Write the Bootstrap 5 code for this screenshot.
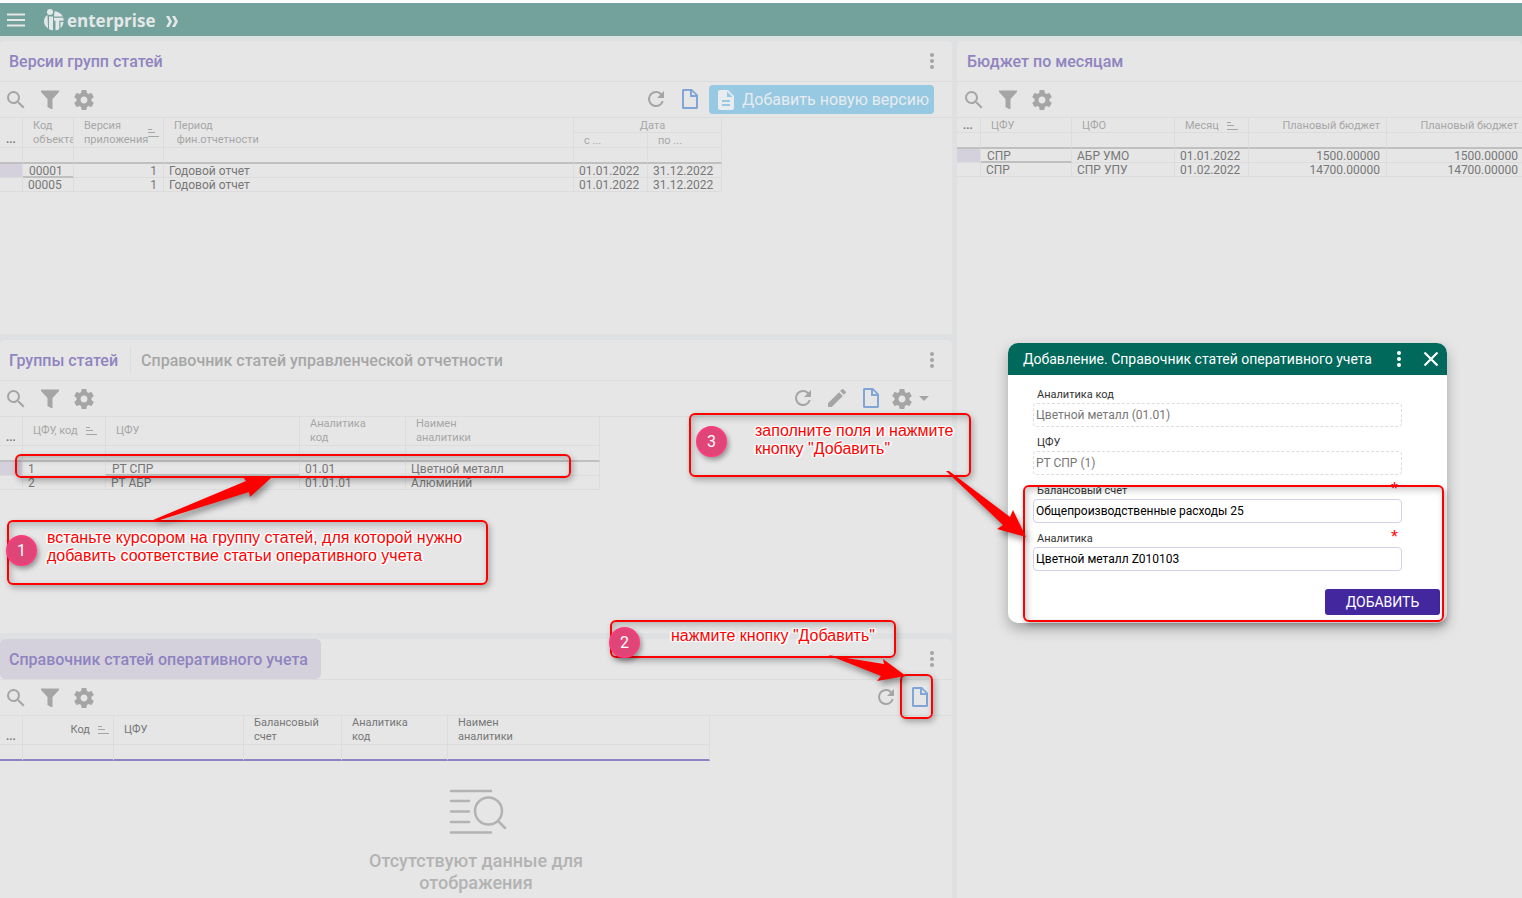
<!DOCTYPE html>
<html lang="ru">
<head>
<meta charset="utf-8">
<meta name="viewport" content="width=device-width, initial-scale=1">
<title>Справочник статей оперативного учета</title>
<link rel="stylesheet" href="https://cdn.jsdelivr.net/npm/bootstrap@5.3.0/dist/css/bootstrap.min.css">
<style>
:root{--surface:#e6e6e6;--line:#dcdcdd;--gutter:#dfe0e2;--violet:#8f84c0;--tint:#d4d1dc;--icon:#a5a5a5;--muted:#a6a6a6;--ink:#777}
body{font-family:Roboto,"Open Sans",sans-serif;font-size:12px;line-height:14px;color:var(--ink);background:var(--gutter)}
button{padding:0;border:0;background:none;color:inherit}
svg{display:block;fill:currentColor}
.shell{min-height:100vh;border-top:3px solid #fdfdfd}
.topbar{height:33px;background:#73a29c;color:#e4e8e8}
.brand{font:700 17px/20px "Open Sans",sans-serif;color:inherit}
.brand span{padding:3px 0 0 3px}
.unfold{margin:4px 0 0 10px}
.board{display:grid;grid-template-columns:minmax(0,952fr) minmax(0,565fr);grid-template-rows:293fr 293fr 259fr;gap:6px 5px;padding-top:5px}
.pane{background:var(--surface);border-radius:5px 5px 0 0;overflow:hidden;min-height:0;min-width:0}
.pane-tall{grid-column:2;grid-row:1/4}
.pane-head{height:41px;border-bottom:1px solid var(--line)}
.pane-head h2{font-size:16px;height:40px;line-height:42px;font-weight:500;margin:0;padding:0 9px;color:var(--violet)}
.pane-head h2.other{color:var(--muted);border-left:1px solid var(--line);height:28px;line-height:30px;padding-left:10px}
.pane-head h2.picked{background:var(--tint);border-radius:0 5px 5px 5px;padding-right:13px}
.kebab{width:24px;height:24px;color:var(--icon);margin-right:8px}
.tools{height:36px;border-bottom:1px solid var(--line);padding:0 20px 0 4px;gap:10px;color:var(--icon)}
.pane-tall .tools{padding-left:5px}
.pane-tall h2{padding-left:10px}
.tools .blue{color:#7fa6d6}
.new-version{height:29px;margin:0 -2px 0 -3px;padding:0 5px;gap:4px;border-radius:4px;background:#97c9e2;color:#e8ecee;font-size:16px}
.actions{margin-left:-3px;gap:5px;padding-right:3px}
.data-grid{table-layout:fixed;border-collapse:separate;border-spacing:0;width:0}
.data-grid th,.data-grid td{padding:2px 6px 0 5px;border-right:1px solid var(--line);border-bottom:1px solid var(--line);white-space:nowrap;overflow:hidden;height:14px;line-height:11px}
.data-grid th{font-size:11px;font-weight:400;line-height:14px;padding:0 0 0 10px;color:var(--muted);height:15px}
.data-grid .low th{padding-top:1px;line-height:13px}
.data-grid .low th[rowspan]{line-height:14px}
.data-grid .tall th{height:29px}
.data-grid .mark-col,.data-grid .low .mark-col{padding:0 0 0 6px;vertical-align:bottom;color:var(--ink);font-weight:700}
.data-grid .num{text-align:right}
.data-grid th.num,.data-grid .low th.num{padding:1px 6px 0 0}
.data-grid .filter td{height:16px;border-bottom:2px solid #c0c0c0}
.data-grid .here{background:var(--tint)}
.data-grid .cursor{box-shadow:inset 0 -1px #bfbfbf;border-bottom-color:#bfbfbf;padding-left:6px}
.active-grid th{color:var(--ink)}
.active-grid .filter td{border-bottom-color:var(--violet)}
.empty{color:#b3b3b3;font-size:18px;font-weight:500;line-height:22px;padding-top:26px}
.empty svg{margin-bottom:15px}
.empty p{max-width:240px}
.over{position:absolute}
.dialog-box{left:1008px;top:343px;width:439px;border-radius:10px;background:#fff;overflow:hidden;color:#333}
.dialog-shade{box-shadow:0 6px 14px rgba(0,0,0,.28)}
.dialog-top{height:32px;background:#00695c;color:#fff;padding:0 4px 0 15px}
.dialog-top h1{font-size:14px;font-weight:400;line-height:32px;margin:0}
.fields{padding:4px 45px 0 25px}
.fields label{height:24px;padding:9px 0 0 4px;font-size:11px;color:#333}
.fields .need::after{content:"*";float:right;color:#f00;font:18px/18px "Liberation Sans",sans-serif;padding-right:4px;margin-top:-4px}
.fields input{width:100%;height:24px;padding:0 2px;border:1px solid #d4d0ec;border-radius:4px;font-size:12px;color:#000;background:#fff}
.fields input:disabled{border:1px dashed #ddd;color:#777;opacity:1}
.submit{width:115px;height:26px;margin:18px 7px 8px 0;border-radius:3px;background:#43279f;color:#fff;font-size:14px}
.notes{inset:0;pointer-events:none;overflow:hidden}
.frame{border:2px solid #f00;border-radius:6px;box-shadow:2px 3px 6px rgba(0,0,0,.28),inset 2px 3px 7px rgba(0,0,0,.22)}
.say{font:16px/18px "Liberation Sans",sans-serif;color:#f00;white-space:nowrap;text-shadow:0 0 2px #fff,1px 1px 1px #fff,-1px -1px 1px #fff,1px -1px 1px #fff,-1px 1px 1px #fff,2px 0 1px #fff,-2px 0 1px #fff}
.step{width:31px;height:31px;border-radius:50%;background:#e04578;border:2px solid #fb3c7c;color:#fff;font-size:16px;line-height:27px;text-align:center;box-shadow:2px 3px 5px rgba(0,0,0,.35)}
.arrows{filter:drop-shadow(2px 4px 3px rgba(0,0,0,.4));fill:#f00}
</style>
<script src="https://cdn.jsdelivr.net/npm/bootstrap@5.3.0/dist/js/bootstrap.bundle.min.js"></script>
</head>
<body>
<svg class="d-none" xmlns="http://www.w3.org/2000/svg">
  <symbol id="i-search" viewBox="0 0 24 24"><path d="M15.5 14h-.79l-.28-.27A6.47 6.47 0 0 0 16 9.500 6.500 6.500 0 1 0 9.500 16c1.610 0 3.090-.59 4.230-1.570l.27.280v.79l5 4.990L20.490 19l-4.990-5zm-6 0C7.010 14 5 11.990 5 9.500S7.010 5 9.500 5 14 7.010 14 9.500 11.990 14 9.500 14z"/></symbol>
  <symbol id="i-filter" viewBox="0 0 24 24"><path d="M3 2.500h18v1.500l-6.500 7V21h-1.500l-3.500-2v-8L3 4z"/></symbol>
  <symbol id="i-gear" viewBox="0 0 24 24"><path d="M19.430 12.980c.04-.32.07-.64.07-.98s-.03-.66-.07-.98l2.110-1.650c.19-.15.24-.42.12-.64l-2-3.460c-.12-.22-.39-.3-.61-.22l-2.490 1c-.52-.4-1.080-.73-1.690-.98l-.38-2.650A.488.488 0 0 0 14 2h-4c-.25 0-.46.18-.49.42l-.38 2.650c-.61.25-1.170.59-1.690.98l-2.490-1c-.23-.09-.49 0-.61.22l-2 3.460c-.13.22-.07.49.12.64l2.110 1.650c-.04.32-.07.65-.07.98s.03.66.07.98l-2.110 1.650c-.19.15-.24.42-.12.64l2 3.460c.12.22.39.3.61.22l2.490-1c.52.4 1.080.73 1.690.98l.38 2.650c.03.24.24.42.49.42h4c.25 0 .46-.18.49-.42l.38-2.650c.61-.25 1.170-.59 1.690-.98l2.490 1c.23.09.49 0 .61-.22l2-3.460c.12-.22.07-.49-.12-.64l-2.110-1.650zM12 15.500c-1.930 0-3.500-1.570-3.500-3.500s1.570-3.500 3.500-3.500 3.500 1.570 3.500 3.500-1.570 3.500-3.500 3.500z"/></symbol>
  <symbol id="i-refresh" viewBox="0 0 24 24"><path d="M17.650 5.350A7.958 7.958 0 0 0 12 3a8 8 0 1 0 7.730 10h-2.080A5.990 5.990 0 0 1 12 17a6 6 0 1 1 0-12c1.660 0 3.140.69 4.220 1.780L13 10h7V3l-2.350 2.350z"/></symbol>
  <symbol id="i-page" viewBox="0 0 24 24"><path d="M5.500 1H14l6 6v12.500c0 .8-.7 1.500-1.500 1.500h-13c-.8 0-1.500-.7-1.500-1.500v-17C4 1.700 4.700 1 5.500 1zM6 3v16h12V9h-6V3zm8 .5V7h3.500z"/></symbol>
  <symbol id="i-doc" viewBox="0 0 24 24"><path d="M14 2H6c-1.100 0-2 .9-2 2v16c0 1.100.9 2 2 2h12c1.100 0 2-.9 2-2V8l-6-6zm2 16H8v-2h8v2zm0-4H8v-2h8v2zm-3-5V3.500L18.500 9H13z"/></symbol>
  <symbol id="i-pen" viewBox="0 0 24 24"><path d="M3 16.250V20h3.750L17.810 8.940l-3.750-3.750L3 16.250zM20.710 6.040a1 1 0 0 0 0-1.410l-2.340-2.340a1 1 0 0 0-1.410 0l-1.830 1.830 3.750 3.750 1.830-1.830z"/></symbol>
  <symbol id="i-dots" viewBox="0 0 24 24"><circle cx="12" cy="6" r="2"/><circle cx="12" cy="12" r="2"/><circle cx="12" cy="18" r="2"/></symbol>
  <symbol id="i-sort" viewBox="0 0 11 8"><path d="M0 0h4v1H0zM0 3h7v1H0zM0 7h11v1H0z"/></symbol>
</svg>

<div class="shell d-flex flex-column position-relative overflow-hidden">
  <header class="topbar d-flex align-items-center ps-1">
    <button type="button" aria-label="Меню"><svg width="24" height="24" viewBox="0 0 24 24"><path d="M3 5.500h18v2H3zM3 11h18v2H3zM3 16.500h18v2H3z"/></svg></button>
    <a href="#" class="brand d-flex align-items-center text-decoration-none ms-3">
      <svg width="20" height="22" viewBox="0 0 20 22"><circle cx="6" cy="3" r="3"/><path d="M10.500 2.200c4 .3 7 2.300 8.300 5.300H10z"/><path d="M3.500 6C1.200 7.500 0 9.800 0 12.200c0 3 1.600 5.700 4 7.200z"/><path d="M5 7.500h4V21.300c-1.500 0-2.800-.4-4-1z"/><path d="M10 8.800h9.300c.3 1 .4 2 .2 3h-4.300v8.500c-1.100.6-2.300 1-3.700 1v-9.500H10z"/><path d="M16.500 13h3c-.3 2.500-1.300 4.700-3 6.200z"/></svg>
      <span>enterprise</span>
    </a>
    <button type="button" class="unfold" aria-label="Развернуть"><svg width="12" height="11" viewBox="0 0 12 11"><path d="M0 0h3l3 5.500L3 11H0l3-5.500zM6 0h3l3 5.500L9 11H6l3-5.500z"/></svg></button>
  </header>

  <main class="board flex-fill">
    <section class="pane">
      <div class="pane-head d-flex align-items-center"><h2>Версии групп статей</h2><button type="button" class="kebab ms-auto" aria-label="Ещё"><svg width="24" height="24"><use href="#i-dots"/></svg></button></div>
      <div class="tools d-flex align-items-center">
        <button type="button" aria-label="Поиск"><svg width="24" height="24"><use href="#i-search"/></svg></button>
        <button type="button" aria-label="Фильтр"><svg width="24" height="24"><use href="#i-filter"/></svg></button>
        <button type="button" aria-label="Настройки"><svg width="24" height="24"><use href="#i-gear"/></svg></button>
        <button type="button" class="ms-auto" aria-label="Обновить"><svg width="24" height="24"><use href="#i-refresh"/></svg></button>
        <button type="button" class="blue" aria-label="Добавить"><svg width="24" height="24"><use href="#i-page"/></svg></button>
        <button type="button" class="new-version d-flex align-items-center"><svg width="24" height="24"><use href="#i-doc"/></svg>Добавить новую версию</button>
      </div>
      <table class="data-grid">
        <colgroup><col style="width:23px"><col style="width:51px"><col style="width:90px"><col style="width:410px"><col style="width:74px"><col style="width:74px"></colgroup>
        <thead>
          <tr class="low"><th rowspan="2" class="mark-col">...</th><th rowspan="2">Код<br>объекта</th><th rowspan="2"><span class="d-flex align-items-center"><span>Версия<br>приложения</span><svg width="11" height="8"><use href="#i-sort"/></svg></span></th><th rowspan="2">Период<br>&nbsp;фин.отчетности</th><th colspan="2" class="text-center">Дата</th></tr>
          <tr class="low"><th>с ...</th><th>по ...</th></tr>
          <tr class="filter"><td></td><td></td><td></td><td></td><td></td><td></td></tr>
        </thead>
        <tbody>
          <tr><td class="here"></td><td class="cursor">00001</td><td class="num">1</td><td>Годовой отчет</td><td>01.01.2022</td><td>31.12.2022</td></tr>
          <tr><td></td><td>00005</td><td class="num">1</td><td>Годовой отчет</td><td>01.01.2022</td><td>31.12.2022</td></tr>
        </tbody>
      </table>
    </section>

    <section class="pane">
      <div class="pane-head d-flex align-items-center"><h2 class="pe-2 me-1">Группы статей</h2><h2 class="other">Справочник статей управленческой отчетности</h2><button type="button" class="kebab ms-auto" aria-label="Ещё"><svg width="24" height="24"><use href="#i-dots"/></svg></button></div>
      <div class="tools d-flex align-items-center">
        <button type="button" aria-label="Поиск"><svg width="24" height="24"><use href="#i-search"/></svg></button>
        <button type="button" aria-label="Фильтр"><svg width="24" height="24"><use href="#i-filter"/></svg></button>
        <button type="button" aria-label="Настройки"><svg width="24" height="24"><use href="#i-gear"/></svg></button>
        <button type="button" class="ms-auto" aria-label="Обновить"><svg width="24" height="24"><use href="#i-refresh"/></svg></button>
        <button type="button" aria-label="Изменить"><svg width="24" height="24"><use href="#i-pen"/></svg></button>
        <button type="button" class="blue" aria-label="Добавить"><svg width="24" height="24"><use href="#i-page"/></svg></button>
        <button type="button" class="actions d-flex align-items-center" aria-label="Действия"><svg width="24" height="24"><use href="#i-gear"/></svg><svg width="10" height="5" viewBox="0 0 10 5"><path d="M0 0h10L5 5z"/></svg></button>
      </div>
      <table class="data-grid">
        <colgroup><col style="width:23px"><col style="width:83px"><col style="width:194px"><col style="width:106px"><col style="width:194px"></colgroup>
        <thead>
          <tr class="tall"><th class="mark-col">...</th><th><span class="d-flex align-items-center gap-2">ЦФУ, код<svg width="11" height="8"><use href="#i-sort"/></svg></span></th><th>ЦФУ</th><th>Аналитика<br>код</th><th>Наимен<br>аналитики</th></tr>
          <tr class="filter"><td></td><td></td><td></td><td></td><td></td></tr>
        </thead>
        <tbody>
          <tr><td class="here"></td><td>1</td><td class="cursor">РТ СПР</td><td>01.01</td><td>Цветной металл</td></tr>
          <tr><td></td><td>2</td><td>РТ АБР</td><td>01.01.01</td><td>Алюминий</td></tr>
        </tbody>
      </table>
    </section>

    <section class="pane d-flex flex-column">
      <div class="pane-head d-flex align-items-center"><h2 class="picked">Справочник статей оперативного учета</h2><button type="button" class="kebab ms-auto" aria-label="Ещё"><svg width="24" height="24"><use href="#i-dots"/></svg></button></div>
      <div class="tools d-flex align-items-center">
        <button type="button" aria-label="Поиск"><svg width="24" height="24"><use href="#i-search"/></svg></button>
        <button type="button" aria-label="Фильтр"><svg width="24" height="24"><use href="#i-filter"/></svg></button>
        <button type="button" aria-label="Настройки"><svg width="24" height="24"><use href="#i-gear"/></svg></button>
        <button type="button" class="ms-auto" aria-label="Обновить"><svg width="24" height="24"><use href="#i-refresh"/></svg></button>
        <button type="button" class="blue" aria-label="Добавить"><svg width="24" height="24"><use href="#i-page"/></svg></button>
      </div>
      <table class="data-grid active-grid">
        <colgroup><col style="width:23px"><col style="width:91px"><col style="width:130px"><col style="width:98px"><col style="width:106px"><col style="width:262px"></colgroup>
        <thead>
          <tr class="tall"><th class="mark-col">...</th><th><span class="d-flex align-items-center justify-content-end gap-2 pe-1">Код<svg width="11" height="8" color="#a6a6a6"><use href="#i-sort"/></svg></span></th><th>ЦФУ</th><th>Балансовый<br>счет</th><th>Аналитика<br>код</th><th>Наимен<br>аналитики</th></tr>
          <tr class="filter"><td></td><td></td><td></td><td></td><td></td><td></td></tr>
        </thead>
      </table>
      <div class="empty d-flex flex-column align-items-center text-center">
        <svg width="62" height="48" viewBox="0 0 62 48" fill="none" stroke="currentColor" stroke-width="2.500" stroke-linecap="round"><path fill="none" d="M6 4h40M6 14h18M6 24.500h18M6 35h18M6 45.500h40M53 34l7 7"/><circle cx="43.500" cy="24" r="13.500" fill="none"/></svg>
        <p class="mb-0">Отсутствуют данные для отображения</p>
      </div>
    </section>

    <section class="pane pane-tall">
      <div class="pane-head d-flex align-items-center"><h2>Бюджет по месяцам</h2></div>
      <div class="tools d-flex align-items-center">
        <button type="button" aria-label="Поиск"><svg width="24" height="24"><use href="#i-search"/></svg></button>
        <button type="button" aria-label="Фильтр"><svg width="24" height="24"><use href="#i-filter"/></svg></button>
        <button type="button" aria-label="Настройки"><svg width="24" height="24"><use href="#i-gear"/></svg></button>
      </div>
      <table class="data-grid">
        <colgroup><col style="width:24px"><col style="width:91px"><col style="width:103px"><col style="width:74px"><col style="width:138px"><col style="width:138px"></colgroup>
        <thead>
          <tr class="low"><th class="mark-col">...</th><th>ЦФУ</th><th>ЦФО</th><th><span class="d-flex align-items-center gap-2">Месяц<svg width="11" height="8"><use href="#i-sort"/></svg></span></th><th class="num">Плановый бюджет</th><th class="num">Плановый бюджет</th></tr>
          <tr class="filter"><td></td><td></td><td></td><td></td><td></td><td></td></tr>
        </thead>
        <tbody>
          <tr><td class="here"></td><td class="cursor">СПР</td><td>АБР УМО</td><td>01.01.2022</td><td class="num">1500.00000</td><td class="num">1500.00000</td></tr>
          <tr><td></td><td>СПР</td><td>СПР УПУ</td><td>01.02.2022</td><td class="num">14700.00000</td><td class="num">14700.00000</td></tr>
        </tbody>
      </table>
    </section>
  </main>
</div>

<form class="over dialog-box dialog-shade" role="dialog" aria-labelledby="dlg-title">
  <div class="dialog-top d-flex align-items-center">
    <h1 id="dlg-title" class="flex-fill">Добавление. Справочник статей оперативного учета</h1>
    <button type="button" class="me-2" aria-label="Ещё"><svg width="24" height="24"><use href="#i-dots"/></svg></button>
    <button type="button" aria-label="Закрыть"><svg width="24" height="24" viewBox="0 0 24 24"><path d="M5.500 5.500l13 13M18.500 5.500l-13 13" stroke="#fff" stroke-width="2.200"/></svg></button>
  </div>
  <div class="fields">
    <label class="d-block" for="f-code">Аналитика код</label><input class="d-block" id="f-code" type="text" value="Цветной металл (01.01)" disabled>
    <label class="d-block" for="f-unit">ЦФУ</label><input class="d-block" id="f-unit" type="text" value="РТ СПР (1)" disabled>
    <label class="d-block need" for="f-account">Балансовый счет</label><input class="d-block" id="f-account" type="text" value="Общепроизводственные расходы 25">
    <label class="d-block need" for="f-item">Аналитика</label><input class="d-block" id="f-item" type="text" value="Цветной металл Z010103">
  </div>
  <div class="text-end"><button type="submit" class="submit">ДОБАВИТЬ</button></div>
</form>

<div class="over notes">
  <div class="over frame" style="left:15px;top:454px;width:556px;height:24px"></div>
  <div class="over frame" style="left:7px;top:520px;width:481px;height:65px"></div>
  <div class="over frame" style="left:610px;top:620px;width:286px;height:38px"></div>
  <div class="over frame" style="left:900px;top:674px;width:33px;height:45px"></div>
  <div class="over frame" style="left:689px;top:413px;width:282px;height:64px"></div>
  <div class="over frame" style="left:1023px;top:485px;width:421px;height:137px"></div>
  <svg class="over arrows" width="1100" height="720"><path d="M153 520l93-39-4-5 29 2-21 19-1-5-89 28zM828 655l56 9-1-5 23 17-29 5 4-5zM946 471l3 0 61 46 3-7 13 27-29-8 6-4z"/></svg>
  <div class="over step" style="left:6px;top:535px">1</div>
  <div class="over step" style="left:609px;top:627px">2</div>
  <div class="over step" style="left:696px;top:426px">3</div>
  <div class="over say" style="left:47px;top:529px">встаньте курсором на группу статей, для которой нужно<br>добавить соответствие статьи оперативного учета</div>
  <div class="over say" style="left:671px;top:627px">нажмите кнопку "Добавить"</div>
  <div class="over say" style="left:755px;top:422px">заполните поля и нажмите<br>кнопку "Добавить"</div>
</div>
</body>
</html>
